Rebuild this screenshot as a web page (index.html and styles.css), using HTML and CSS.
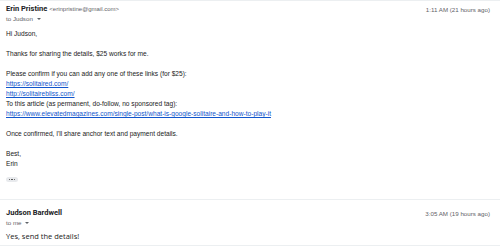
FILE: index.html
```html
<!DOCTYPE html>
<html lang="en">
<head>
  <meta charset="UTF-8">
  <title>Conversation</title>
  <link rel="stylesheet" href="styles.css">
</head>
<body>
  <div class="thread">
    <div class="message">
      <div class="message-head">
        <div class="sender">
          <div class="from"><span class="name">Erin Pristine</span> <span class="address">&lt;erinpristine@gmail.com&gt;</span></div>
          <div class="to">to Judson <span class="caret"></span></div>
        </div>
        <div class="date">1:11 AM (21 hours ago)</div>
      </div>
      <div class="body">
        <p>Hi Judson,</p>
        <p>Thanks for sharing the details, $25 works for me.</p>
        <p>Please confirm if you can add any one of these links (for $25):<br>
          <a href="#">https://solitaired.com/</a><br>
          <a href="#">http://solitairebliss.com/</a><br>
          To this article (as permanent, do-follow, no sponsored tag):<br>
          <a href="#">https://www.elevatedmagazines.com/single-post/what-is-google-solitaire-and-how-to-play-it</a></p>
        <p>Once confirmed, I'll share anchor text and payment details.</p>
        <p>Best,<br>Erin</p>
        <div class="more"><span></span><span></span><span></span></div>
      </div>
    </div>
    <div class="message reply">
      <div class="message-head">
        <div class="sender">
          <div class="from"><span class="name">Judson Bardwell</span></div>
          <div class="to">to me <span class="caret"></span></div>
        </div>
        <div class="date">3:05 AM (19 hours ago)</div>
      </div>
      <div class="body">
        <p>Yes, send the details!</p>
      </div>
    </div>
  </div>
</body>
</html>
```

FILE: styles.css
```css
body {
  margin: 0;
  background: #fff;
  font-family: 'Liberation Sans', Arial, sans-serif;
  color: #222;
}
.thread {
  border-top: 1px solid #eceff1;
}
.message {
  padding: 3px 10px 17px 6px;
}
.message-head {
  display: flex;
  justify-content: space-between;
  align-items: flex-start;
}
.from {
  font-size: 7.5px;
  line-height: 10px;
}
.name {
  font-family: Roboto, 'Liberation Sans', sans-serif;
  font-weight: 700;
  color: #202124;
}
.address {
  font-size: 6px;
  color: #5f6368;
}
.to {
  font-size: 6.2px;
  line-height: 10px;
  color: #5f6368;
}
.caret {
  display: inline-block;
  width: 0;
  height: 0;
  margin-left: 2px;
  vertical-align: 1px;
  border-left: 2px solid transparent;
  border-right: 2px solid transparent;
  border-top: 2.5px solid #5f6368;
}
.date {
  font-size: 6.2px;
  line-height: 10px;
  color: #5f6368;
  padding-top: 1px;
}
.body {
  padding-top: 5px;
  font-size: 6.6px;
  line-height: 10px;
}
.body p {
  margin: 0 0 10px;
}
.body a {
  color: #1155cc;
}
.more {
  display: flex;
  align-items: center;
  justify-content: center;
  gap: 1px;
  width: 12px;
  height: 5px;
  margin-top: -2px;
  background: #e8eaed;
  border-radius: 3px;
}
.more span {
  width: 1.3px;
  height: 1.3px;
  border-radius: 50%;
  background: #444;
}
.reply {
  padding-top: 8px;
  padding-bottom: 4px;
  border-top: 1px solid #eceff1;
  border-bottom: 1px solid #eceff1;
}
.reply .body {
  padding-top: 3px;
  font-family: 'Open Sans', sans-serif;
  font-size: 7.5px;
}
.reply .body p {
  margin: 0;
}
```
